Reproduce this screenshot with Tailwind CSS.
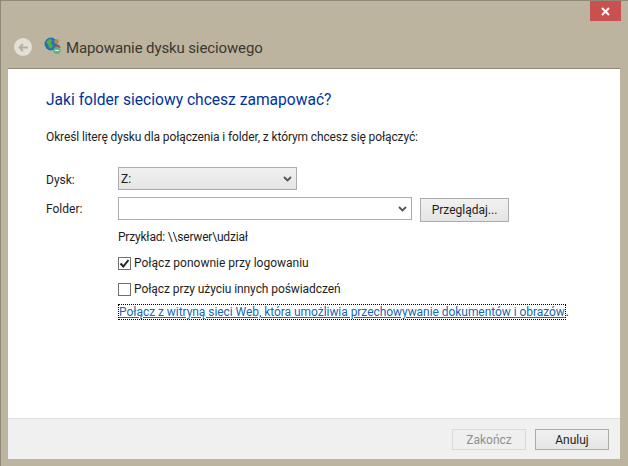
<!DOCTYPE html>
<html lang="pl">
<head>
  <meta charset="UTF-8">
  <title>Mapowanie dysku sieciowego</title>
  <script src="https://cdn.jsdelivr.net/npm/@tailwindcss/browser@4"></script>
</head>
<body class="w-[628px] h-[466px] overflow-hidden bg-[#bdb4a0] font-['Roboto',sans-serif] text-[12px] text-[#1e1e1e]">
  <div class="w-[628px] h-[466px] flex flex-col border-t border-l border-[#8f8a78] pl-[7px] pr-[8px] pb-[7px]">
    <!-- title bar -->
    <div class="h-[21px] flex justify-end shrink-0">
      <div class="w-[31px] h-[20px] bg-[#c9504f] flex items-center justify-center mr-[-1px]">
        <svg width="9" height="9" viewBox="0 0 9 9"><path d="M1 1L8 8M8 1L1 8" stroke="#fff" stroke-width="2"/></svg>
      </div>
    </div>
    <!-- back + caption -->
    <div class="h-[46px] flex items-center shrink-0 pl-[6px] pt-[4px]">
      <div class="w-[18px] h-[18px] rounded-full bg-[#e3dfd6] flex items-center justify-center">
        <svg width="11" height="9" viewBox="0 0 11 9"><path d="M5 1L1.500 4.500L5 8M2 4.500H10" fill="none" stroke="#b5b0a2" stroke-width="1.8"/></svg>
      </div>
      <svg class="ml-[12px] mt-[-3px]" width="18" height="18" viewBox="0 0 18 18">
        <circle cx="7" cy="7" r="6.500" fill="#1c78b0"/>
        <path d="M2 5l4-3.500 2 2-1 3 2 2-2 3-2-1-1-3z" fill="#58a84c"/>
        <circle cx="12.500" cy="4.500" r="2.400" fill="#b8865a"/>
        <path d="M8.500 11c0-2.500 2-3.500 4-3.500s4 1 4 3.500z" fill="#7d5f6a"/>
        <circle cx="13" cy="13.500" r="3.600" fill="#5cb585"/>
        <path d="M11 13.500h4" stroke="#e4f5ea" stroke-width="1"/>
      </svg>
      <span class="ml-[4px] mt-[2px] text-[#3a382f] text-[15px] leading-none tracking-[-0.12px]">Mapowanie dysku sieciowego</span>
    </div>
    <!-- client area -->
    <div class="flex-1 flex flex-col bg-white border-t border-[#8f8a78]">
      <div class="flex-1 pl-[38px] pt-[19px]">
        <h1 class="text-[#003399] text-[15.6px] leading-[24px] font-normal">Jaki folder sieciowy chcesz zamapować?</h1>
        <p class="mt-[17px] leading-[16px] tracking-[-0.12px]">Określ literę dysku dla połączenia i folder, z którym chcesz się połączyć:</p>
        <div class="mt-[22px] flex items-center h-[23px]">
          <span class="w-[72px] pt-[2px]">Dysk:</span>
          <div class="w-[179px] h-[23px] flex items-center justify-between px-[2px] border border-[#acacac] bg-gradient-to-b from-[#f0f0f0] to-[#e5e5e5]">
            <span class="leading-none">Z:</span>
            <svg class="mr-[2px]" width="9" height="6" viewBox="0 0 9 6"><path d="M1 1L4.500 4.500L8 1" fill="none" stroke="#555" stroke-width="1.8"/></svg>
          </div>
        </div>
        <div class="mt-[6px] flex items-start h-[25px]">
          <span class="w-[72px] leading-[27px]">Folder:</span>
          <div class="w-[294px] h-[23px] mt-[1px] flex items-center justify-end border border-[#acacac] bg-white">
            <svg class="mr-[4px]" width="9" height="6" viewBox="0 0 9 6"><path d="M1 1L4.500 4.500L8 1" fill="none" stroke="#555" stroke-width="1.8"/></svg>
          </div>
          <div class="ml-[8px] mt-[2px] w-[89px] h-[24px] flex items-center justify-center border border-[#acacac] bg-gradient-to-b from-[#f0f0f0] to-[#e5e5e5]">Przeglądaj...</div>
        </div>
        <div class="ml-[72px]">
          <p class="mt-[8px] leading-[16px] tracking-[-0.2px]">Przykład: \\serwer\udział</p>
          <div class="mt-[10px] flex items-center h-[16px]">
            <div class="w-[13px] h-[13px] border border-[#707070] flex items-center justify-center">
              <svg width="11" height="11" viewBox="0 0 11 11"><path d="M1.500 5.500L4.300 8.500L9.500 2" fill="none" stroke="#222" stroke-width="2"/></svg>
            </div>
            <span class="ml-[3px]">Połącz ponownie przy logowaniu</span>
          </div>
          <div class="mt-[10px] flex items-center h-[16px]">
            <div class="w-[13px] h-[13px] border border-[#707070]"></div>
            <span class="ml-[3px] tracking-[-0.08px]">Połącz przy użyciu innych poświadczeń</span>
          </div>
          <div class="mt-[6px] flex items-center">
            <a class="leading-[14px] text-[#1568b5] underline border border-dotted border-black tracking-[-0.05px]">Połącz z witryną sieci Web, która umożliwia przechowywanie dokumentów i obrazów</a><span>.</span>
          </div>
        </div>
      </div>
      <!-- footer -->
      <div class="h-[41px] shrink-0 flex items-start justify-end gap-[9px] pr-[11px] pt-[10px] bg-[#f0f0f0] border-t border-[#dfdfdf]">
        <div class="w-[74px] h-[21px] flex items-center justify-center border border-[#d9d9d9] bg-[#efefef] text-[#8f8f8f]">Zakończ</div>
        <div class="w-[74px] h-[21px] flex items-center justify-center border border-[#acacac] bg-gradient-to-b from-[#f0f0f0] to-[#e5e5e5]">Anuluj</div>
      </div>
    </div>
  </div>
</body>
</html>
